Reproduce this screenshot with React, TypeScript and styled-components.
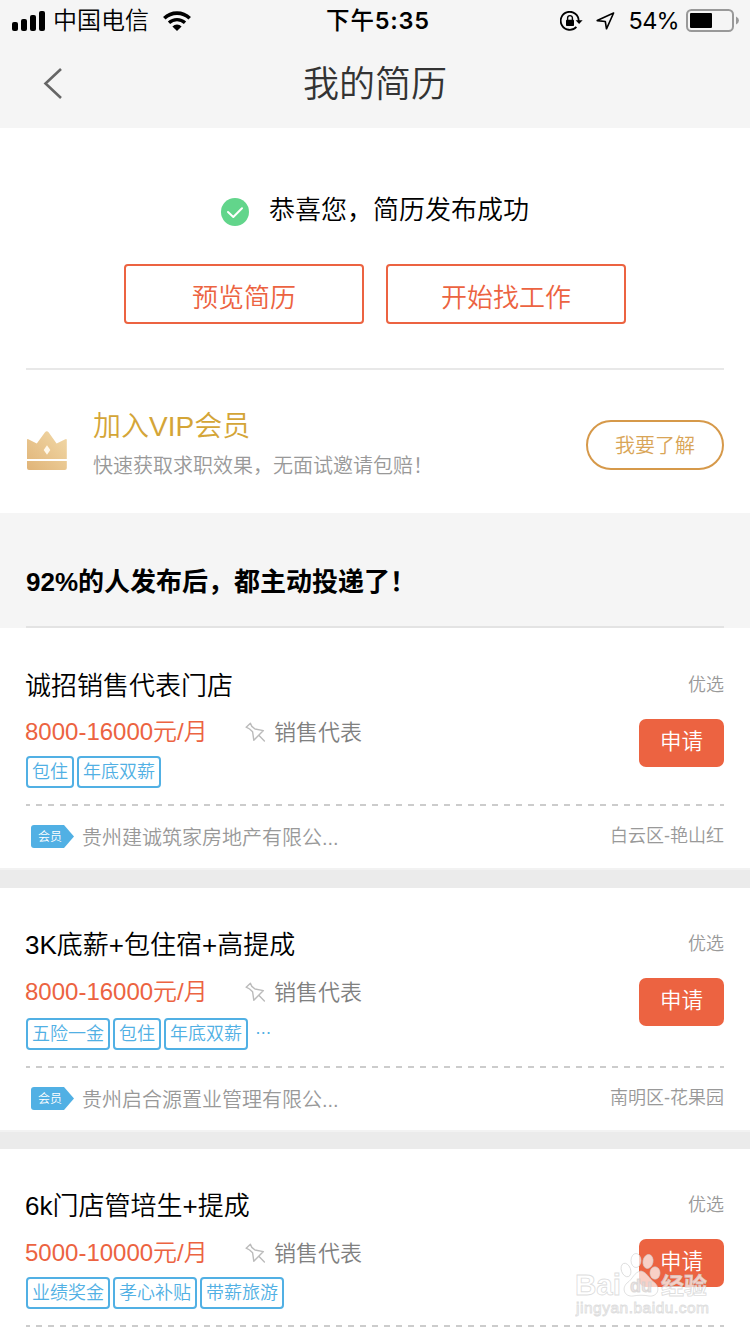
import React from "react";
import styled, { createGlobalStyle } from "styled-components";

const sans = `"Liberation Sans", "Noto Sans CJK SC", sans-serif`;
const system = `Inter, "Noto Sans CJK SC", sans-serif`;

const GlobalStyle = createGlobalStyle`
  *, *::before, *::after { box-sizing: border-box; }
  html, body { margin: 0; padding: 0; }
  body { font-family: ${sans}; font-weight: 350; background: #fff; color: #000; overflow: hidden; }
  button { font: inherit; margin: 0; padding: 0; background: none; border: 0; }
  svg { display: block; flex: none; }
`;

const Screen = styled.main`
  position: relative;
  width: 750px;
  height: 1334px;
  overflow: hidden;
  background: #fff;
`;

const Header = styled.header`
  height: 128px;
  background: #f5f5f5;
`;

const StatusBar = styled.div`
  display: grid;
  grid-template-columns: 1fr auto 1fr;
  align-items: center;
  height: 40px;
  padding: 0 11px 0 12px;
  font-family: ${system};
  font-size: 24px;
  line-height: 40px;
`;

const StatusGroup = styled.div<{ $end?: boolean }>`
  display: flex;
  align-items: center;
  justify-content: ${(p) => (p.$end ? "flex-end" : "flex-start")};
`;

const Carrier = styled.span`
  margin: 0 14px 0 8px;
  padding-top: 1px;
`;

const Clock = styled.time`
  padding: 1px 0 0 5px;
  font-size: 23.5px;
  font-weight: 500;
  letter-spacing: 0.8px;
  b { font-weight: 600; }
`;

const RotationLock = styled.span`
  margin-right: 13px;
`;

const Percent = styled.span`
  margin: 0 7px 0 14px;
  padding-top: 1px;
  font-size: 23.5px;
  font-weight: 400;
  letter-spacing: -0.7px;
`;

const NavBar = styled.nav`
  display: grid;
  grid-template-columns: 64px 1fr 64px;
  align-items: center;
  height: 88px;
`;

const BackButton = styled.button`
  padding-left: 43px;
`;

const NavTitle = styled.h1`
  margin: 0;
  padding-top: 2px;
  font-size: 36px;
  font-weight: inherit;
  line-height: 84px;
  text-align: center;
  color: #333;
`;

const Success = styled.section`
  display: flex;
  flex-direction: column;
  height: 242px;
  margin: 0 26px;
  padding-top: 62px;
  border-bottom: 2px solid #e8e8e8;
`;

const SuccessMessage = styled.div`
  display: flex;
  justify-content: center;
  align-items: center;
  gap: 20px;
  height: 40px;
  font-size: 26px;
  line-height: 40px;
  svg { margin-top: 4px; }
`;

const Actions = styled.div`
  display: flex;
  justify-content: center;
  gap: 22px;
  margin-top: 34px;
`;

const OutlineButton = styled.button`
  width: 240px;
  height: 60px;
  padding-top: 8px;
  border: 2px solid #ec6341;
  border-radius: 4px;
  color: #ec6341;
  font-size: 26px;
  line-height: 48px;
`;

const Vip = styled.section`
  display: flex;
  align-items: flex-start;
  height: 143px;
  padding: 0 26px;
  > svg { margin-top: 60px; }
`;

const VipText = styled.div`
  flex: 1;
  margin: 37px 0 0 26px;
`;

const VipTitle = styled.h2`
  margin: 0;
  font-size: 28px;
  font-weight: inherit;
  line-height: 40px;
  color: #d4a537;
`;

const VipNote = styled.p`
  margin: 0;
  font-size: 20px;
  line-height: 38px;
  color: #999;
`;

const LearnMore = styled.button`
  width: 138px;
  height: 50px;
  margin-top: 50px;
  padding-top: 2px;
  border: 2px solid #d6994a;
  border-radius: 25px;
  color: #d9a557;
  font-size: 20px;
  line-height: 44px;
`;

const Banner = styled.section`
  height: 115px;
  padding: 0 26px;
  background: #f5f5f5;
`;

const BannerTitle = styled.h2`
  height: 115px;
  margin: 0;
  padding-top: 49px;
  border-bottom: 2px solid #e3e3e3;
  font-size: 26px;
  line-height: 40px;
  font-weight: 700;
`;

const Card = styled.article<{ $first?: boolean }>`
  padding: ${(p) => (p.$first ? 38 : 37)}px 26px 0;
`;

const Divider = styled.div<{ $first?: boolean }>`
  height: ${(p) => (p.$first ? 20 : 19)}px;
  border-top: 2px solid #f2f2f2;
  background: #ebebeb;
`;

const CardHead = styled.div`
  display: flex;
  justify-content: space-between;
  height: 39px;
  line-height: 39px;
`;

const JobTitle = styled.h3`
  margin: 0 0 0 -1px;
  padding-top: 1px;
  font-size: 26px;
  font-weight: inherit;
`;

const Label = styled.span`
  font-size: 18px;
  color: #999;
`;

const CardBody = styled.div`
  display: flex;
  justify-content: space-between;
`;

const Pay = styled.div<{ $first?: boolean }>`
  display: flex;
  align-items: center;
  height: 40px;
  margin-top: ${(p) => (p.$first ? 7 : 8)}px;
  line-height: 40px;
  font-size: 24px;
  color: #ec6341;
`;

const PayAmount = styled.span`
  width: 220px;
  margin-left: -1px;
`;

const Category = styled.span`
  margin-left: 8px;
  padding-top: 2px;
  font-size: 22px;
  color: #808080;
`;

const Tags = styled.div<{ $more?: boolean }>`
  display: flex;
  gap: 3px;
  height: 32px;
  margin-top: ${(p) => (p.$more ? 6 : 4)}px;
  font-size: 18px;
  line-height: 28px;
  color: #51b0e4;
`;

const Tag = styled.span`
  padding: 0 4px;
  border: 2px solid #51b0e4;
  border-radius: 4px;
`;

const More = styled.span`
  margin-left: 4px;
  letter-spacing: -0.8px;
`;

const ApplyButton = styled.button`
  width: 85px;
  height: 48px;
  margin-top: 14px;
  padding-bottom: 2px;
  border-radius: 7px;
  background: #ec6341;
  color: #fff;
  font-size: 21.5px;
  line-height: 46px;
`;

const CardFoot = styled.div`
  display: flex;
  align-items: center;
  height: 64px;
  margin-top: 16px;
  padding: 0 0 0 5px;
  background: repeating-linear-gradient(to right, #ccc 0 6px, transparent 6px 12px) -2px 0 / 800px 2px no-repeat;
  font-size: 20px;
  line-height: 40px;
  color: #999;
`;

const MemberBadge = styled.span`
  width: 43px;
  height: 23px;
  margin-top: 1px;
  padding-left: 7px;
  border-radius: 3px 0 0 3px;
  clip-path: polygon(0 0, 33px 0, 100% 50%, 33px 100%, 0 100%);
  background: #51b0e4;
  color: #fff;
  font-size: 12px;
  line-height: 24px;
`;

const Company = styled.span`
  flex: 1;
  margin-left: 8px;
  padding-top: 3px;
`;

const Watermark = styled.div`
  position: absolute;
  left: 575px;
  top: 1252px;
  width: 140px;
  height: 70px;
`;

function SignalIcon() {
  return (
    <svg width="33" height="20" viewBox="0 0 33 20">
      <rect x="0" y="11" width="6" height="9" rx="2" />
      <rect x="9" y="8" width="6" height="12" rx="2" />
      <rect x="18" y="4" width="6" height="16" rx="2" />
      <rect x="27" y="0" width="6" height="20" rx="2" />
    </svg>
  );
}

function WifiIcon() {
  return (
    <svg width="28" height="20" viewBox="0 0 28 20" fill="none" stroke="#000">
      <path d="M1.3 7.2 A18.4 18.4 0 0 1 26.7 7.2" strokeWidth="3.6" />
      <path d="M6 11.8 A11.6 11.6 0 0 1 22 11.8" strokeWidth="3.3" />
      <path d="M14 20 L9.4 15.4 A6.8 6.8 0 0 1 18.6 15.4 Z" fill="#000" stroke="none" />
    </svg>
  );
}

function RotationLockIcon() {
  return (
    <svg width="23" height="20" viewBox="0 0 23 20" fill="none" stroke="#000">
      <path d="M18.7 10 A9 9 0 1 0 16.4 15.8" strokeWidth="1.8" />
      <path d="M15.6 9.2 H22.6 L19.1 13 Z" fill="#000" stroke="none" />
      <rect x="6" y="8.7" width="8" height="6.3" rx="0.8" fill="#000" stroke="none" />
      <path d="M7.6 9 V7 A2.4 2.4 0 0 1 12.4 7 V9" strokeWidth="1.4" />
    </svg>
  );
}

function LocationIcon() {
  return (
    <svg width="19" height="18" viewBox="0 0 19 18" fill="none" stroke="#000" strokeWidth="1.6" strokeLinejoin="round">
      <path d="M17.6 1 L1.2 8.6 L9.3 9.5 L10.5 16.8 Z" />
    </svg>
  );
}

function BatteryIcon() {
  return (
    <svg width="53" height="23" viewBox="0 0 53 23">
      <rect x="1" y="1" width="46" height="21" rx="4.5" fill="none" stroke="#999" strokeWidth="2" />
      <rect x="4" y="4" width="22" height="15" rx="1" />
      <path d="M50 7.5 Q53 9.2 53 11.5 T50 15.5 Z" fill="#999" />
    </svg>
  );
}

function BackIcon() {
  return (
    <svg width="20" height="32" viewBox="0 0 20 32" fill="none" stroke="#666" strokeWidth="2.6">
      <path d="M18 1 L2.5 15.5 L18 30" />
    </svg>
  );
}

function CheckIcon() {
  return (
    <svg width="28" height="28" viewBox="0 0 28 28">
      <circle cx="14" cy="14" r="14" fill="#62d58b" />
      <path d="M7 14 L12.3 19 L21 10.3" fill="none" stroke="#fff" strokeWidth="2" strokeLinecap="round" strokeLinejoin="round" />
    </svg>
  );
}

function CrownIcon() {
  return (
    <svg width="41" height="40" viewBox="0 0 41 40">
      <defs>
        <linearGradient id="gold" x1="1" y1="0" x2="0" y2="1">
          <stop offset="0" stopColor="#f2d9a8" />
          <stop offset="1" stopColor="#e0b478" />
        </linearGradient>
      </defs>
      <path
        d="M1 10 Q1 8.6 2.3 9.2 L10.8 13.6 L19 2.3 Q20.8 .3 22.6 2.3 L30.6 13.6 L39.3 9.2 Q40.8 8.6 40.8 10 V29 H1 Z M1 31 H40.8 V38 Q40.8 40 38.8 40 H3 Q1 40 1 38 Z"
        fill="url(#gold)"
      />
      <path d="M21 15.2 L24.3 20 L21 24.8 L17.7 20 Z" fill="#fff8ea" />
    </svg>
  );
}

function PinIcon() {
  return (
    <svg width="21" height="21" viewBox="0 0 21 21" fill="none" stroke="#bbb" strokeWidth="1.4" strokeLinejoin="round" strokeLinecap="round">
      <path d="M1.2 5.2 L5.4 1.2 L6.8 4.4 L10 7 L18.4 8.6 L8.8 18.2 L7.6 9.8 L4.6 7 L1.2 5.2 M13.8 13.2 L19.4 19" />
    </svg>
  );
}

function BaiduWatermark() {
  return (
    <Watermark>
      <svg
        width="140"
        height="70"
        viewBox="0 0 140 70"
        fill="#fff"
        fillOpacity="0.7"
        stroke="#cfcfcf"
        strokeOpacity="0.7"
        strokeWidth="0.9"
        fontFamily="Liberation Sans, Noto Sans CJK SC, sans-serif"
        fontWeight="700"
      >
        <text x="0" y="43" fontSize="30" textLength="46" lengthAdjust="spacingAndGlyphs">Bai</text>
        <ellipse cx="51" cy="18" rx="4.6" ry="7" transform="rotate(-20 51 18)" />
        <ellipse cx="61" cy="8.5" rx="5" ry="7" />
        <ellipse cx="73" cy="9.5" rx="5" ry="7" transform="rotate(10 73 9.5)" />
        <ellipse cx="80" cy="21" rx="5" ry="6.2" />
        <path d="M66 19 C72 20 74 27 80 31 C86 37 82 45 74 44 C69 43 63 43 58 44 C50 45 46 37 52 31 C58 27 59 20 66 19 Z" />
        <text x="55" y="40" fontSize="18" fill="#e4d8d6">du</text>
        <text x="86" y="42" fontSize="23" textLength="46">经验</text>
        <text x="1" y="61" fontSize="15.5" fontWeight="400" textLength="133">jingyan.baidu.com</text>
      </svg>
    </Watermark>
  );
}

interface Job {
  title: string;
  pay: string;
  tags: string[];
  more?: boolean;
  company?: string;
  area?: string;
}

const jobs: Job[] = [
  { title: "诚招销售代表门店", pay: "8000-16000元/月", tags: ["包住", "年底双薪"], company: "贵州建诚筑家房地产有限公...", area: "白云区-艳山红" },
  { title: "3K底薪+包住宿+高提成", pay: "8000-16000元/月", tags: ["五险一金", "包住", "年底双薪"], more: true, company: "贵州启合源置业管理有限公...", area: "南明区-花果园" },
  { title: "6k门店管培生+提成", pay: "5000-10000元/月", tags: ["业绩奖金", "孝心补贴", "带薪旅游"] },
];

function JobCard({ job, first }: { job: Job; first: boolean }) {
  return (
    <>
      <Card $first={first}>
        <CardHead>
          <JobTitle>{job.title}</JobTitle>
          <Label>优选</Label>
        </CardHead>
        <CardBody>
          <div>
            <Pay $first={first}>
              <PayAmount>{job.pay}</PayAmount>
              <PinIcon />
              <Category>销售代表</Category>
            </Pay>
            <Tags $more={job.more}>
              {job.tags.map((tag) => (
                <Tag key={tag}>{tag}</Tag>
              ))}
              {job.more && <More>···</More>}
            </Tags>
          </div>
          <ApplyButton>申请</ApplyButton>
        </CardBody>
        <CardFoot>
          {job.company && (
            <>
              <MemberBadge>会员</MemberBadge>
              <Company>{job.company}</Company>
              <Label>{job.area}</Label>
            </>
          )}
        </CardFoot>
      </Card>
      <Divider $first={first} />
    </>
  );
}

export default function App() {
  return (
    <Screen>
      <GlobalStyle />
      <Header>
        <StatusBar>
          <StatusGroup>
            <SignalIcon />
            <Carrier>中国电信</Carrier>
            <WifiIcon />
          </StatusGroup>
          <Clock>
            下午<b>5:35</b>
          </Clock>
          <StatusGroup $end>
            <RotationLock>
              <RotationLockIcon />
            </RotationLock>
            <LocationIcon />
            <Percent>54%</Percent>
            <BatteryIcon />
          </StatusGroup>
        </StatusBar>
        <NavBar>
          <BackButton aria-label="返回">
            <BackIcon />
          </BackButton>
          <NavTitle>我的简历</NavTitle>
        </NavBar>
      </Header>
      <Success>
        <SuccessMessage>
          <CheckIcon />
          <span>恭喜您，简历发布成功</span>
        </SuccessMessage>
        <Actions>
          <OutlineButton>预览简历</OutlineButton>
          <OutlineButton>开始找工作</OutlineButton>
        </Actions>
      </Success>
      <Vip>
        <CrownIcon />
        <VipText>
          <VipTitle>加入VIP会员</VipTitle>
          <VipNote>快速获取求职效果，无面试邀请包赔！</VipNote>
        </VipText>
        <LearnMore>我要了解</LearnMore>
      </Vip>
      <Banner>
        <BannerTitle>92%的人发布后，都主动投递了！</BannerTitle>
      </Banner>
      {jobs.map((job, i) => (
        <JobCard key={job.title} job={job} first={i === 0} />
      ))}
      <BaiduWatermark />
    </Screen>
  );
}
